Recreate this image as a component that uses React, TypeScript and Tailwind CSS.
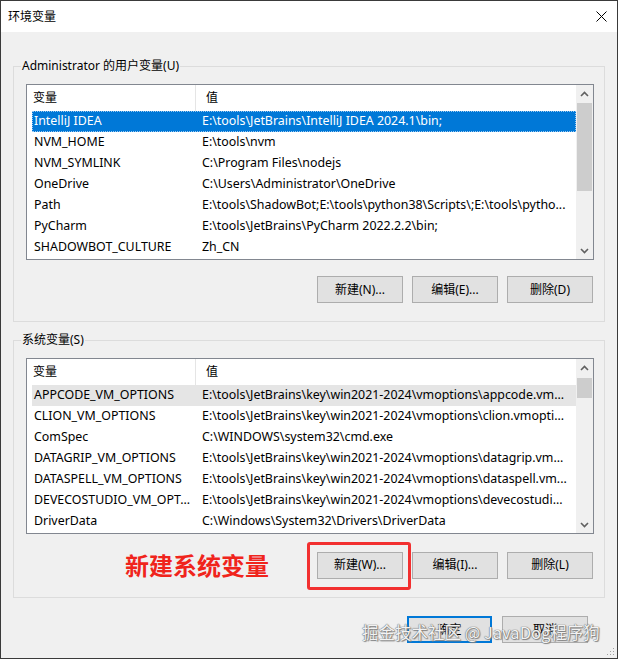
import React from "react";

const FONT = "font-['Noto_Sans','Noto_Sans_CJK_SC',sans-serif]";

type Row = [string, string];

const userRows: Row[] = [
  ["IntelliJ IDEA", "E:\\tools\\JetBrains\\IntelliJ IDEA 2024.1\\bin;"],
  ["NVM_HOME", "E:\\tools\\nvm"],
  ["NVM_SYMLINK", "C:\\Program Files\\nodejs"],
  ["OneDrive", "C:\\Users\\Administrator\\OneDrive"],
  ["Path", "E:\\tools\\ShadowBot;E:\\tools\\python38\\Scripts\\;E:\\tools\\pytho..."],
  ["PyCharm", "E:\\tools\\JetBrains\\PyCharm 2022.2.2\\bin;"],
  ["SHADOWBOT_CULTURE", "Zh_CN"],
];

const sysRows: Row[] = [
  ["APPCODE_VM_OPTIONS", "E:\\tools\\JetBrains\\key\\win2021-2024\\vmoptions\\appcode.vm..."],
  ["CLION_VM_OPTIONS", "E:\\tools\\JetBrains\\key\\win2021-2024\\vmoptions\\clion.vmopti..."],
  ["ComSpec", "C:\\WINDOWS\\system32\\cmd.exe"],
  ["DATAGRIP_VM_OPTIONS", "E:\\tools\\JetBrains\\key\\win2021-2024\\vmoptions\\datagrip.vm..."],
  ["DATASPELL_VM_OPTIONS", "E:\\tools\\JetBrains\\key\\win2021-2024\\vmoptions\\dataspell.vm..."],
  ["DEVECOSTUDIO_VM_OPT...", "E:\\tools\\JetBrains\\key\\win2021-2024\\vmoptions\\devecostudi..."],
  ["DriverData", "C:\\Windows\\System32\\Drivers\\DriverData"],
];

function Chevron({ up }: { up: boolean }) {
  return (
    <svg width="9" height="6" viewBox="0 0 9 6">
      <path
        d={up ? "M1 5 L4.5 1.5 L8 5" : "M1 1 L4.5 4.5 L8 1"}
        fill="none"
        stroke="#606060"
        strokeWidth="1.6"
      />
    </svg>
  );
}

function ListBox({
  rows,
  selected,
  thumbTop,
  thumbHeight,
}: {
  rows: Row[];
  selected: "focus" | "blur";
  thumbTop: number;
  thumbHeight: number;
}) {
  return (
    <div className="h-[176px] border border-[#828790] bg-white flex">
      <div className="flex-1 min-w-0 flex flex-col">
        <div className="h-[26px] flex items-center text-[12px] text-black">
          <div className="w-[169px] pl-[6px] h-full flex items-center border-r border-[#e5e5e5]">变量</div>
          <div className="pl-[10px]">值</div>
        </div>
        <div className="pl-[5px] flex flex-col">
          {rows.map((r, i) => {
            const sel = i === 0;
            const cls = sel
              ? selected === "focus"
                ? "bg-[#0078d7] text-white outline-1 outline-dotted outline-[#9cc9f0] -outline-offset-1"
                : "bg-[#e5e5e5] text-black"
              : "text-black";
            return (
              <div key={i} className={`h-[21px] flex items-center text-[12.4px] whitespace-nowrap ${cls}`}>
                <div className="w-[170px] pl-[2px] overflow-hidden">{r[0]}</div>
                <div className="flex-1 overflow-hidden">{r[1]}</div>
              </div>
            );
          })}
        </div>
      </div>
      <div className="w-[17px] bg-[#f0f0f0] flex flex-col">
        <div className="h-[18px] flex items-center justify-center">
          <Chevron up />
        </div>
        <div className="flex-1 relative">
          <div
            className="mx-[1px] bg-[#cdcdcd]"
            style={{ marginTop: thumbTop, height: thumbHeight }}
          />
        </div>
        <div className="h-[17px] flex items-center justify-center">
          <Chevron up={false} />
        </div>
      </div>
    </div>
  );
}

function Btn({ children, wide = 86, primary = false }: { children: React.ReactNode; wide?: number; primary?: boolean }) {
  return (
    <div
      className={`h-[27px] flex items-center justify-center text-[12px] text-black bg-[#e1e1e1] ${
        primary ? "border-2 border-[#0078d7]" : "border border-[#adadad]"
      }`}
      style={{ width: wide }}
    >
      {children}
    </div>
  );
}

export default function App() {
  return (
    <div className={`${FONT} w-[618px] h-[659px] border border-[#3a3a3a] bg-[#f0f0f0] relative flex flex-col overflow-hidden`}>
      <div className="h-[31px] bg-white flex items-center justify-between pl-[7px] pr-[10px]">
        <span className="text-[12px] text-black">环境变量</span>
        <svg width="11" height="11" viewBox="0 0 11 11">
          <path d="M0.5 0.5 L10.5 10.5 M10.5 0.5 L0.5 10.5" stroke="#000" strokeWidth="1" />
        </svg>
      </div>

      <div className="px-[12px] flex flex-col">
        <fieldset className="mt-[26px] border border-[#dcdcdc] pb-[18px]">
          <legend className="ml-[7px] px-[1px] text-[12px] leading-[16px] text-black">Administrator 的用户变量(U)</legend>
          <div className="pl-[12px] pr-[10px] mt-[10px]">
            <ListBox rows={userRows} selected="focus" thumbTop={0} thumbHeight={88} />
            <div className="mt-[16px] flex justify-end gap-[9px] pr-[1px]">
              <Btn>新建(N)...</Btn>
              <Btn>编辑(E)...</Btn>
              <Btn>删除(D)</Btn>
            </div>
          </div>
        </fieldset>

        <fieldset className="mt-[10px] border border-[#dcdcdc] pb-[17px]">
          <legend className="ml-[7px] px-[1px] text-[12px] leading-[16px] text-black">系统变量(S)</legend>
          <div className="pl-[12px] pr-[10px] mt-[10px]">
            <ListBox rows={sysRows} selected="blur" thumbTop={1} thumbHeight={20} />
            <div className="mt-[16px] flex justify-end items-center gap-[9px] pr-[1px]">
              <span className="mr-[39px] text-[24px] leading-[30px] font-bold text-[#f0241c] font-['Noto_Sans_CJK_SC',sans-serif]">
                新建系统变量
              </span>
              <div className="relative">
                <Btn>新建(W)...</Btn>
                <div className="absolute left-[-10px] right-[-8px] top-[-10px] bottom-[-11px] border-[3px] border-[#f23030] rounded-[3px]" />
              </div>
              <Btn>编辑(I)...</Btn>
              <Btn>删除(L)</Btn>
            </div>
          </div>
        </fieldset>

        <div className="mt-[18px] flex justify-end gap-[10px] pr-[17px]">
          <Btn wide={85} primary>确定</Btn>
          <Btn wide={86}>取消</Btn>
        </div>
      </div>

      <div className="absolute left-[361px] top-[620px] text-[16.5px] leading-[22px] text-[#f2f2f2] whitespace-nowrap font-['Noto_Sans_CJK_SC',sans-serif] [text-shadow:0_0_1px_#666,0_0_1px_#666,1px_1px_1px_#888]">
        掘金技术社区 @ JavaDog程序狗
      </div>

      <svg className="absolute right-[2px] bottom-[2px]" width="8" height="8" viewBox="0 0 8 8">
        <rect x="6" y="0" width="1" height="1" fill="#a0a0a0" />
        <rect x="3" y="3" width="1" height="1" fill="#a0a0a0" />
        <rect x="6" y="3" width="1" height="1" fill="#a0a0a0" />
        <rect x="0" y="6" width="1" height="1" fill="#a0a0a0" />
        <rect x="3" y="6" width="1" height="1" fill="#a0a0a0" />
        <rect x="6" y="6" width="1" height="1" fill="#a0a0a0" />
      </svg>
    </div>
  );
}
